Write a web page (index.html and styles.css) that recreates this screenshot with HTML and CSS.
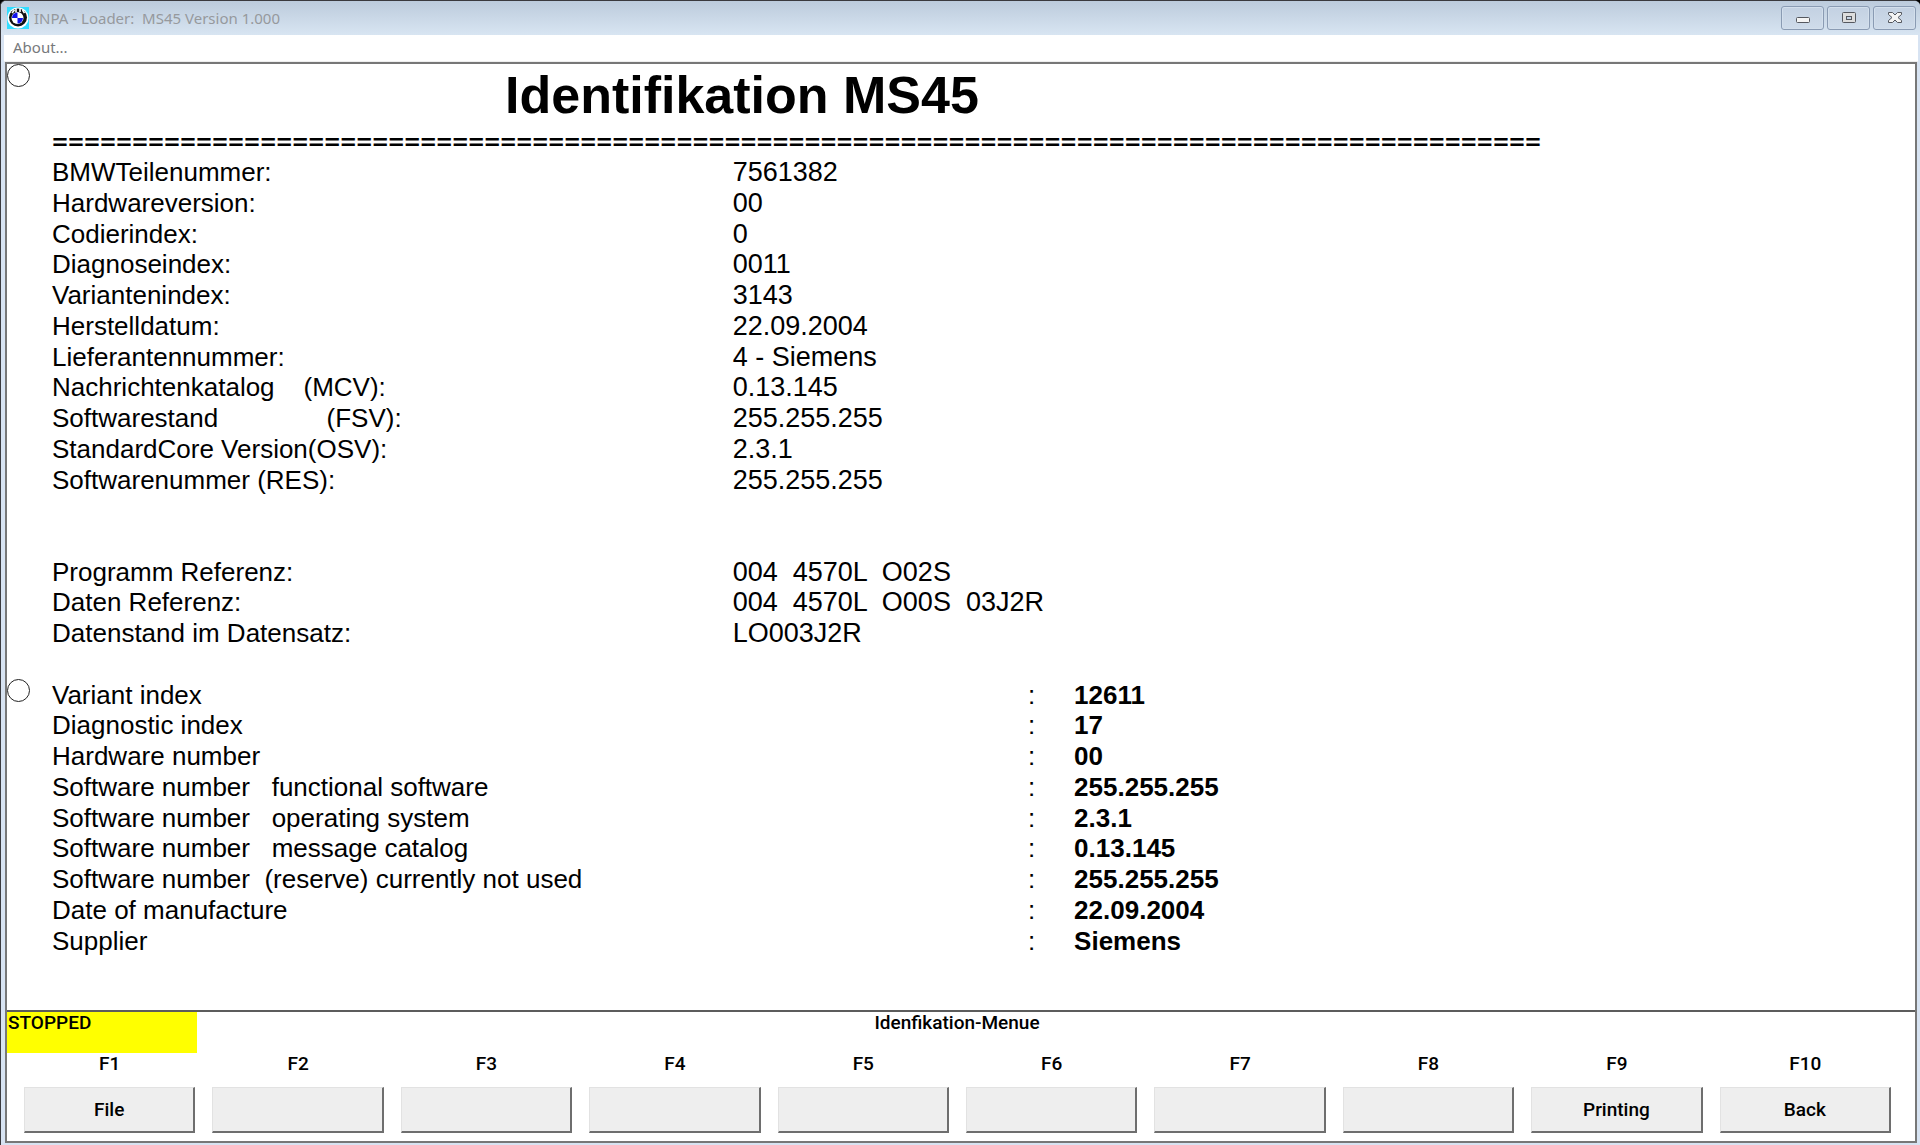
FILE: index.html
```html
<!DOCTYPE html>
<html lang="de">
<head>
<meta charset="utf-8">
<title>INPA - Loader: MS45 Version 1.000</title>
<link rel="stylesheet" href="styles.css">
</head>
<body>
<div class="window">
  <header class="titlebar">
    <svg class="app-icon" viewBox="0 0 22 22" aria-hidden="true">
      <rect width="22" height="22" fill="#3df"/>
      <circle cx="11" cy="11" r="10.6" fill="#fff"/>
      <circle cx="11" cy="10.5" r="9" fill="#111"/>
      <path d="M5 6 L7.500 3 M9 5 V1.500 M13 5 V1.500 M15.500 3 L17.500 6" stroke="#fff" stroke-width="1.600"/>
      <circle cx="10.500" cy="11" r="6" fill="#fff"/>
      <path d="M10.500 11 V5.500 A5.500 5.500 0 0 0 5 11 Z M10.500 11 V16.500 A5.500 5.500 0 0 0 16 11 Z" fill="#11e"/>
    </svg>
    <span class="caption">INPA - Loader:  MS45 Version 1.000</span>
    <div class="window-buttons">
      <button class="window-button" aria-label="Minimize"><svg width="20" height="16" viewBox="0 0 20 16"><rect x="3.500" y="7.500" width="13" height="5" rx="1" fill="#f4f4f4" stroke="#55585f"/></svg></button>
      <button class="window-button" aria-label="Maximize"><svg width="20" height="16" viewBox="0 0 20 16"><rect x="3.500" y="2.500" width="13" height="10" rx="1" fill="#ddd" stroke="#55585f"/><rect x="7.500" y="6.500" width="5" height="3" fill="#c5d3e4" stroke="#55585f"/></svg></button>
      <button class="window-button" aria-label="Close"><svg width="20" height="16" viewBox="0 0 20 16"><path d="M3.500 2.500 H7.500 L10 5 L12.500 2.500 H16.500 V4.500 L13 7.500 L16.500 10.500 V12.500 H12.500 L10 10 L7.500 12.500 H3.500 V10.500 L7 7.500 L3.500 4.500 Z" fill="#f4f4f4" stroke="#55585f"/></svg></button>
    </div>
  </header>
  <nav class="menubar"><button class="menu-item">About...</button></nav>
  <div class="frame">
    <main class="screen">
      <section class="band band-title">
        <input class="marker" type="radio" name="block" aria-label="Identifikation">
        <h1 class="heading">Identifikation MS45</h1>
      </section>
      <section class="band band-rule">
        <div class="rule">=============================================================================================</div>
      </section>
      <section class="band band-ident">
        <table class="data"><tbody>
          <tr><th scope="row">BMWTeilenummer:</th><td class="wide">7561382</td></tr>
          <tr><th scope="row">Hardwareversion:</th><td class="wide">00</td></tr>
          <tr><th scope="row">Codierindex:</th><td class="wide">0</td></tr>
          <tr><th scope="row">Diagnoseindex:</th><td class="wide">0011</td></tr>
          <tr><th scope="row">Variantenindex:</th><td class="wide">3143</td></tr>
          <tr><th scope="row">Herstelldatum:</th><td class="wide">22.09.2004</td></tr>
          <tr><th scope="row">Lieferantennummer:</th><td class="wide">4 - Siemens</td></tr>
          <tr><th scope="row">Nachrichtenkatalog    (MCV):</th><td class="wide">0.13.145</td></tr>
          <tr><th scope="row">Softwarestand               (FSV):</th><td class="wide">255.255.255</td></tr>
          <tr><th scope="row">StandardCore Version(OSV):</th><td class="wide">2.3.1</td></tr>
          <tr><th scope="row">Softwarenummer (RES):</th><td class="wide">255.255.255</td></tr>
        </tbody></table>
      </section>
      <section class="band band-reference">
        <table class="data"><tbody>
          <tr><th scope="row">Programm Referenz:</th><td class="wide">004  4570L  O02S</td></tr>
          <tr><th scope="row">Daten Referenz:</th><td class="wide">004  4570L  O00S  03J2R</td></tr>
          <tr><th scope="row">Datenstand im Datensatz:</th><td class="wide">LO003J2R</td></tr>
        </tbody></table>
      </section>
      <section class="band band-variant">
        <input class="marker" type="radio" name="block" aria-label="Variant index">
        <table class="data"><tbody>
          <tr><th scope="row">Variant index</th><td class="colon">:</td><td class="strong">12611</td></tr>
          <tr><th scope="row">Diagnostic index</th><td class="colon">:</td><td class="strong">17</td></tr>
          <tr><th scope="row">Hardware number</th><td class="colon">:</td><td class="strong">00</td></tr>
          <tr><th scope="row">Software number   functional software</th><td class="colon">:</td><td class="strong">255.255.255</td></tr>
          <tr><th scope="row">Software number   operating system</th><td class="colon">:</td><td class="strong">2.3.1</td></tr>
          <tr><th scope="row">Software number   message catalog</th><td class="colon">:</td><td class="strong">0.13.145</td></tr>
          <tr><th scope="row">Software number  (reserve) currently not used</th><td class="colon">:</td><td class="strong">255.255.255</td></tr>
          <tr><th scope="row">Date of manufacture</th><td class="colon">:</td><td class="strong">22.09.2004</td></tr>
          <tr><th scope="row">Supplier</th><td class="colon">:</td><td class="strong">Siemens</td></tr>
        </tbody></table>
      </section>
    </main>
    <footer class="panel">
      <div class="status-row">
        <div class="status">STOPPED</div>
        <div class="menu-name">Idenfikation-Menue</div>
      </div>
      <div class="keys">
        <div class="key"><label for="f1">F1</label><button id="f1" class="key-button">File</button></div>
        <div class="key"><label for="f2">F2</label><button id="f2" class="key-button"></button></div>
        <div class="key"><label for="f3">F3</label><button id="f3" class="key-button"></button></div>
        <div class="key"><label for="f4">F4</label><button id="f4" class="key-button"></button></div>
        <div class="key"><label for="f5">F5</label><button id="f5" class="key-button"></button></div>
        <div class="key"><label for="f6">F6</label><button id="f6" class="key-button"></button></div>
        <div class="key"><label for="f7">F7</label><button id="f7" class="key-button"></button></div>
        <div class="key"><label for="f8">F8</label><button id="f8" class="key-button"></button></div>
        <div class="key"><label for="f9">F9</label><button id="f9" class="key-button">Printing</button></div>
        <div class="key"><label for="f10">F10</label><button id="f10" class="key-button">Back</button></div>
      </div>
    </footer>
  </div>
</div>
</body>
</html>
```
FILE: styles.css
```css
* { box-sizing: border-box; }

body {
  margin: 0;
  background: #000;
  font-family: "Liberation Sans", Arial, sans-serif;
  color: #000;
}

button { font: inherit; color: inherit; padding: 0; }

.window {
  display: flex;
  flex-direction: column;
  min-height: 100vh;
  border-top: 1px solid #3a3a3e;
  border-left: 1px solid #3a3a3e;
  border-radius: 6px 6px 0 0;
  background: #d7e3f2;
  overflow: hidden;
}

.titlebar {
  display: flex;
  align-items: center;
  height: 34px;
  padding: 0 4px 0 6px;
  background: linear-gradient(#bccbdc, #d8e5f2);
}

.app-icon { width: 22px; height: 22px; }

.caption {
  flex: 1;
  padding-left: 5px;
  font: 15px/20px "Noto Sans", "Open Sans", sans-serif;
  color: #96999d;
  white-space: pre;
}

.window-buttons { display: flex; gap: 3px; }

.window-button {
  display: flex;
  align-items: center;
  justify-content: center;
  width: 43px;
  height: 24px;
  border: 1px solid #8a9bb3;
  border-radius: 3px;
  background: linear-gradient(#c3d1e2, #cfdcea);
  box-shadow: inset 0 0 0 1px #d3dfec;
}

.menubar {
  display: flex;
  height: 27px;
  margin: 0 2px 0 3px;
  background: #fff;
  border-bottom: 1px solid #eee;
}

.menu-item {
  align-self: flex-start;
  border: 0;
  padding-left: 9px;
  background: none;
  font: 15px/24px "Noto Sans", "Open Sans", sans-serif;
  color: #77797c;
}

.frame {
  flex: 1;
  display: flex;
  flex-direction: column;
  margin: 0 3px 2px 4px;
  border: 2px solid #777;
  background: #fff;
}

.screen {
  flex: 1;
  display: flex;
  flex-direction: column;
  padding-bottom: 54px;
  font-size: 26px;
  line-height: 30px;
}

/* One flex unit is one text line of the diagnostic screen. */
.band {
  flex: 1 0 0;
  display: grid;
  grid-template-columns: 45px 1fr;
  align-items: start;
}

.band > :not(.marker) { grid-column: 2; }
.band-title { flex-grow: 2; }
.band-ident { flex-grow: 13; grid-template-rows: 11fr 2fr; }
.band-reference { flex-grow: 4; grid-template-rows: 3fr 1fr; }
.band-variant { flex-grow: 9; grid-template-rows: 1fr; }

.marker {
  appearance: none;
  width: 23px;
  height: 23px;
  margin: 0;
  border: 1px solid #222;
  border-radius: 50%;
  background: #fff;
}

.heading {
  margin: 0;
  padding-left: 453px;
  font-size: 52px;
  line-height: 62px;
  white-space: nowrap;
}

.rule {
  font: 600 28px/30px "Open Sans", sans-serif;
  white-space: nowrap;
}

.data {
  display: grid;
  align-self: stretch;
  border-spacing: 0;
}

.data tbody { display: grid; grid-auto-rows: 1fr; }

.data tr {
  display: grid;
  grid-template-columns: 680fr 295fr 46fr 840fr;
  align-items: center;
}

.data th,
.data td {
  padding: 0;
  text-align: left;
  font-weight: normal;
  white-space: pre;
}

.data .wide { grid-column: 2 / -1; font-size: 27px; }
.data .colon { grid-column: 3; }
.data .strong { grid-column: 4; font-weight: bold; }

.panel {
  border-top: 2px solid #5c5c5c;
  padding-bottom: 8px;
  font: 500 19px/22px Roboto, sans-serif;
}

.status-row {
  display: grid;
  grid-template-columns: 1fr auto 1fr;
  padding-right: 8px;
}

.status {
  justify-self: start;
  width: 20%;
  min-width: 190px;
  height: 41px;
  padding-left: 1px;
  background: #ff0;
}

.keys {
  display: grid;
  grid-template-columns: repeat(10, 1fr);
  gap: 17px;
  padding: 0 24px 0 17px;
}

.key {
  display: flex;
  flex-direction: column;
  gap: 12px;
  text-align: center;
}

.key-button {
  width: 100%;
  height: 46px;
  border: solid;
  border-width: 1px 2px 2px 1px;
  border-color: #e2e2e2 #6e6e6e #6e6e6e #e2e2e2;
  background: #eee;
}
```
